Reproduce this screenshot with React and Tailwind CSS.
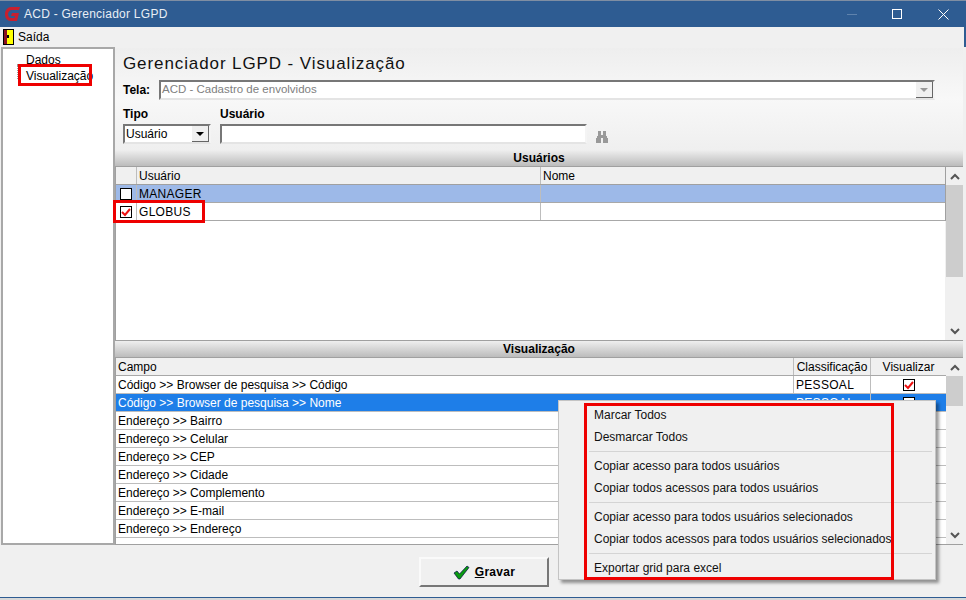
import React from 'react';

const font = "font-['Liberation_Sans',Arial,sans-serif]";

const usuarios = [
  { nome: 'MANAGER', marcado: false, sel: true },
  { nome: 'GLOBUS', marcado: true, sel: false },
];

const campos = [
  'Código >> Browser de pesquisa >> Código',
  'Código >> Browser de pesquisa >> Nome',
  'Endereço >> Bairro',
  'Endereço >> Celular',
  'Endereço >> CEP',
  'Endereço >> Cidade',
  'Endereço >> Complemento',
  'Endereço >> E-mail',
  'Endereço >> Endereço',
];

const Logo = () => (
  <svg width="18" height="16" viewBox="0 0 18 16">
    <path d="M16 1H7C4 1 1 4 1 8c0 4 2 7 6 7h6l2-8H8L7 10h4l-.5 2H7C5 12 4 10 4 8c0-2 2-4 4-4h7z" fill="#c8202f" />
  </svg>
);

const Porta = () => (
  <svg width="11" height="16" viewBox="0 0 11 16" shapeRendering="crispEdges">
    <rect x="0" y="0" width="11" height="16" fill="#000" />
    <rect x="1" y="1" width="3" height="14" fill="#8a1020" />
    <rect x="4" y="1" width="6" height="14" fill="#ffff00" />
    <rect x="4" y="6" width="2" height="3" fill="#000" />
  </svg>
);

const Check = ({ marcado }) => (
  <div className="w-[12px] h-[12px] border border-black bg-white flex items-center justify-center">
    {marcado && (
      <svg width="10" height="10" viewBox="0 0 10 10">
        <path d="M1 5l3 3 5-6" fill="none" stroke="#ee1111" strokeWidth="2" />
      </svg>
    )}
  </div>
);

const Seta = ({ baixo }) => (
  <svg width="10" height="7" viewBox="0 0 10 7">
    <path d={baixo ? 'M1 1l4 4 4-4' : 'M1 6l4-4 4 4'} fill="none" stroke="#555" strokeWidth="2" />
  </svg>
);

const Scroll = ({ thumb }) => (
  <div className="w-[17px] shrink-0 bg-[#f0f0f0] flex flex-col">
    <div className="h-[18px] flex items-center justify-center"><Seta /></div>
    <div className="flex-1 bg-[#f0f0f0]">
      <div className={`${thumb} bg-[#cdcdcd]`}></div>
    </div>
    <div className="h-[18px] flex items-center justify-center"><Seta baixo /></div>
  </div>
);

const Secao = ({ titulo }) => (
  <div className="h-[17px] shrink-0 bg-gradient-to-b from-[#efefef] to-[#bcbcbc] flex items-center justify-center text-[12px] font-bold text-black border-b border-[#a0a0a0]">
    {titulo}
  </div>
);

const Item = ({ children }) => (
  <div className="h-[22px] pl-[35px] flex items-center whitespace-nowrap text-[12px] text-[#111]">{children}</div>
);

const Sep = () => <div className="h-px bg-[#d4d4d4] mx-[31px] ml-[30px] mr-[3px] my-[3px]"></div>;

export default function App() {
  return (
    <div className={`${font} relative w-[966px] h-[600px] overflow-hidden bg-[#f0f0f0] flex flex-col text-[12px] text-black`}>
      {/* barra de titulo */}
      <div className="h-[27px] shrink-0 bg-[#2e5c92] border-t border-[#7f8ea3] flex items-center text-white">
        <div className="ml-[3px] w-[20px] flex justify-center"><Logo /></div>
        <span className="ml-[1px] text-[12px] tracking-[0.25px] text-[#e8eef5]">ACD - Gerenciador LGPD</span>
        <div className="ml-auto flex items-center">
          <div className="w-[10px] h-px bg-[#5f83ad] mr-[35px]"></div>
          <div className="w-[10px] h-[10px] border border-white mr-[36px]"></div>
          <svg width="11" height="11" viewBox="0 0 11 11" className="mr-[17px]">
            <path d="M.5.5l10 10M10.5.5l-10 10" stroke="#fff" strokeWidth="1" />
          </svg>
        </div>
      </div>
      {/* menu */}
      <div className="h-[20px] shrink-0 flex items-center pl-[3px] gap-[4px] border-r-2 border-[#2e5c92]">
        <Porta />
        <span>Saída</span>
      </div>
      {/* corpo */}
      <div className="h-[498px] shrink-0 flex pl-[1px] pr-[3px]">
        <div className="relative w-[114px] shrink-0 bg-white border-2 border-[#a8a8a8] border-b-[2px]">
          <div className="pl-[23px] pt-[3px] leading-[16px]">
            <div className="h-[16px] text-[12px]">Dados</div>
            <div className="h-[16px] text-[12px]">Visualização</div>
          </div>
          <div className="absolute left-[14px] top-[15px] w-[3px] h-[3px] border-t border-dotted border-[#999]"></div>
          <div className="absolute left-[14px] top-[16px] h-[14px] border-l border-dotted border-[#999]"></div>
          <div className="absolute left-[15px] top-[15px] w-[74px] h-[22px] border-[3px] border-[#ee0000]"></div>
        </div>

        <div className="flex-1 min-w-0 flex flex-col pl-[0px] pt-[1px]">
          {/* formulario */}
          <div className="h-[102px] shrink-0 pl-[8px] bg-gradient-to-b from-[#eeeeee] via-[#f8f8f8] to-[#efefef]">
            <div className="pt-[0px] h-[31px] flex items-center text-[17px] tracking-[0.9px] text-[#111]">Gerenciador LGPD - Visualização</div>
            <div className="flex items-center h-[22px] mt-[0px]">
              <span className="w-[36px] font-bold">Tela:</span>
              <div className="w-[776px] h-[20px] bg-white border-2 border-t-[#777] border-l-[#777] border-r-[#f4f4f4] border-b-[#e4e4e4] flex items-center pl-[1px] text-[#808080] text-[11.5px]">
                <span>ACD - Cadastro de envolvidos</span>
                <div className="ml-auto w-[17px] h-[16px] bg-[#f0f0f0] border-r border-b border-[#666] flex items-center justify-center">
                  <div className="w-0 h-0 border-x-[4px] border-x-transparent border-t-[4px] border-t-[#999]"></div>
                </div>
              </div>
            </div>
            <div className="flex mt-[3px]">
              <div className="w-[97px] shrink-0">
                <div className="font-bold h-[20px] flex items-center">Tipo</div>
                <div className="w-[88px] h-[20px] bg-white border-2 border-t-[#777] border-l-[#777] border-r-[#f4f4f4] border-b-[#e4e4e4] flex items-center pl-[1px]">
                  <span>Usuário</span>
                  <div className="ml-auto w-[17px] h-[16px] bg-[#f0f0f0] border-r border-b border-[#666] flex items-center justify-center">
                    <div className="w-0 h-0 border-x-[4px] border-x-transparent border-t-[4px] border-t-black"></div>
                  </div>
                </div>
              </div>
              <div className="w-[367px] shrink-0">
                <div className="font-bold h-[20px] flex items-center">Usuário</div>
                <div className="h-[20px] bg-white border-2 border-t-[#777] border-l-[#777] border-r-[#f4f4f4] border-b-[#e4e4e4]"></div>
              </div>
              <svg width="12" height="12" viewBox="0 0 12 12" className="ml-[9px] mt-[27px]" shapeRendering="crispEdges">
                <path d="M2 0h3v4h2V0h3v4l2 4v4H7V7H5v5H0V8l2-4z" fill="#999" />
              </svg>
            </div>
          </div>

          <Secao titulo="Usuários" />
          {/* grid usuarios */}
          <div className="relative h-[174px] shrink-0 flex bg-[#f0f0f0] border-l border-b border-[#a0a0a0]">
            <div className="flex-1 min-w-0 bg-white">
              <div className="flex h-[18px] bg-[#f0f0f0] border-b border-[#a0a0a0]">
                <div className="w-[21px] border-r border-[#bdbdbd]"></div>
                <div className="w-[404px] border-r border-[#bdbdbd] pl-[2px] flex items-center">Usuário</div>
                <div className="flex-1 pl-[2px] flex items-center">Nome</div>
              </div>
              {usuarios.map((u) => (
                <div key={u.nome} className={`flex h-[18px] border-b border-[#a8a8a8] ${u.sel ? 'bg-[#9db9e8]' : 'bg-white'}`}>
                  <div className="w-[21px] border-r border-[#bdbdbd] flex items-center justify-center"><Check marcado={u.marcado} /></div>
                  <div className="w-[404px] border-r border-[#bdbdbd] pl-[2px] flex items-center tracking-[0.3px]">{u.nome}</div>
                  <div className="flex-1"></div>
                </div>
              ))}
            </div>
            <div className="w-px bg-[#a0a0a0] h-[54px]"></div>
            <Scroll thumb="h-[92px]" />
            <div className="absolute left-[-3px] top-[33px] w-[92px] h-[23px] border-[3px] border-[#ee0000]"></div>
          </div>

          <Secao titulo="Visualização" />
          {/* grid campos */}
          <div className="h-[187px] shrink-0 flex border-l border-b border-[#a0a0a0] bg-white">
            <div className="flex-1 min-w-0 overflow-hidden">
              <div className="flex h-[18px] bg-[#f0f0f0] border-b border-[#a8a8a8]">
                <div className="w-[678px] border-r border-[#bdbdbd] pl-[2px] flex items-center">Campo</div>
                <div className="w-[77px] border-r border-[#bdbdbd] flex items-center justify-center">Classificação</div>
                <div className="flex-1 flex items-center justify-center">Visualizar</div>
              </div>
              {campos.map((c, i) => (
                <div key={c} className={`flex h-[18px] border-b border-[#bdbdbd] ${i === 1 ? 'bg-[#1e7ee8] text-white' : 'bg-white'}`}>
                  <div className={`w-[678px] pl-[2px] flex items-center ${i === 0 ? 'border-r border-[#bdbdbd]' : ''}`}>{c}</div>
                  {i < 2 && (
                    <>
                      <div className="w-[77px] border-r border-[#bdbdbd] pl-[2px] flex items-center tracking-[0.3px]">PESSOAL</div>
                      <div className="flex-1 flex items-center justify-center"><Check marcado={i === 0} /></div>
                    </>
                  )}
                </div>
              ))}
            </div>
            <Scroll thumb="h-[30px]" />
          </div>
        </div>
      </div>

      {/* rodape */}
      <div className="h-[52px] shrink-0 flex justify-center pt-[12px] pl-[2px]">
        <button className="w-[130px] h-[30px] bg-[#f0f0f0] border-2 border-t-[#fafafa] border-l-[#fafafa] border-r-[#777] border-b-[#777] flex items-center justify-center gap-[5px] font-bold text-[12px] tracking-[0.3px]">
          <svg width="17" height="15" viewBox="0 0 17 15">
            <path d="M1 8l3-2 2.5 3L14 1l2 1.5L7 14h-1.500z" fill="#0a9a10" stroke="#06064a" strokeWidth="0.7" />
          </svg>
          <span><span className="underline">G</span>ravar</span>
        </button>
      </div>
      <div className="h-px bg-[#2e5c92] shrink-0"></div>
      <div className="flex-1 bg-[#d8d8d8]"></div>

      {/* menu de contexto */}
      <div className="absolute left-[558px] top-[400px] w-[378px] h-[180px] bg-[#f0f0f0] border border-[#c4c4c4] shadow-[3px_3px_3px_rgba(0,0,0,0.4)] pt-[3px]">
        <Item>Marcar Todos</Item>
        <Item>Desmarcar Todos</Item>
        <Sep />
        <Item>Copiar acesso para todos usuários</Item>
        <Item>Copiar todos acessos para todos usuários</Item>
        <Sep />
        <Item>Copiar acesso para todos usuários selecionados</Item>
        <Item>Copiar todos acessos para todos usuários selecionados</Item>
        <Sep />
        <Item>Exportar grid para excel</Item>
        <div className="absolute left-[25px] top-[2px] w-[310px] h-[177px] border-[3px] border-[#ee0000]"></div>
      </div>
    </div>
  );
}
